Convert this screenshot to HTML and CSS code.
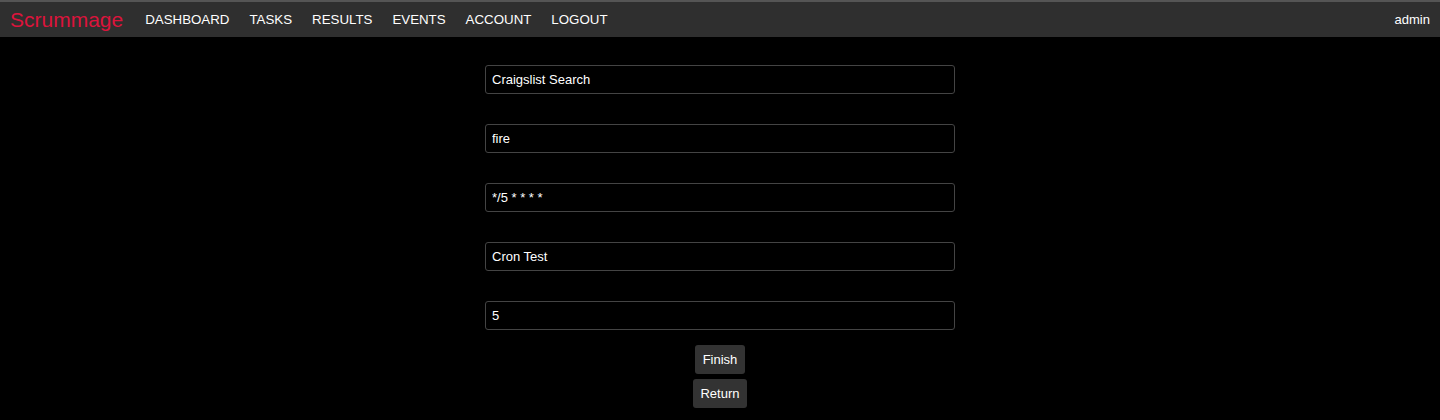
FILE: index.html
```html
<!DOCTYPE html>
<html>
<head>
<meta charset="utf-8">
<link rel="stylesheet" href="styles.css">
</head>
<body>
<nav class="navbar">
  <a class="brand" href="#">Scrummage</a>
  <ul class="nav-links">
    <li><a href="#">DASHBOARD</a></li>
    <li><a href="#">TASKS</a></li>
    <li><a href="#">RESULTS</a></li>
    <li><a href="#">EVENTS</a></li>
    <li><a href="#">ACCOUNT</a></li>
    <li><a href="#">LOGOUT</a></li>
  </ul>
  <span class="user">admin</span>
</nav>
<main class="content">
  <form class="task-form">
    <input class="field" type="text" value="Craigslist Search">
    <input class="field" type="text" value="fire">
    <input class="field" type="text" value="*/5 * * * *">
    <input class="field" type="text" value="Cron Test">
    <input class="field" type="text" value="5">
    <div class="actions">
      <button type="button" class="btn">Finish</button>
      <button type="button" class="btn">Return</button>
    </div>
  </form>
</main>
</body>
</html>
```
FILE: styles.css
```css
* { box-sizing: border-box; }
html, body {
  margin: 0;
  padding: 0;
  background: #000;
  font-family: "Liberation Sans", Arial, sans-serif;
  color: #fff;
}
.navbar {
  display: flex;
  align-items: center;
  height: 37px;
  background: #2f2f2f;
  border-top: 2px solid #555;
  padding: 0 10px;
}
.brand {
  color: #dc143c;
  font-size: 21px;
  text-decoration: none;
  margin-right: 12px;
}
.nav-links {
  display: flex;
  list-style: none;
  margin: 0;
  padding: 0;
  flex: 1;
}
.nav-links a {
  display: block;
  color: #fff;
  text-decoration: none;
  font-size: 13.3px;
  padding: 0 10px;
}
.user {
  font-size: 13px;
  color: #fff;
}
.content {
  display: flex;
  justify-content: center;
  padding-top: 28px;
}
.task-form {
  width: 470px;
  display: flex;
  flex-direction: column;
  align-items: center;
  gap: 30px;
}
.field {
  width: 470px;
  height: 29px;
  background: #000;
  border: 1px solid #444;
  border-radius: 3px;
  color: #fff;
  font-family: "Liberation Sans", Arial, sans-serif;
  font-size: 13px;
  padding: 0 6px;
  outline: none;
}
.actions {
  display: flex;
  flex-direction: column;
  align-items: center;
  gap: 5px;
  margin-top: -15px;
}
.btn {
  height: 29px;
  padding: 0 7.5px;
  background: #333;
  border: none;
  border-radius: 3px;
  color: #fff;
  font-family: "Liberation Sans", Arial, sans-serif;
  font-size: 13px;
  cursor: pointer;
}
```
